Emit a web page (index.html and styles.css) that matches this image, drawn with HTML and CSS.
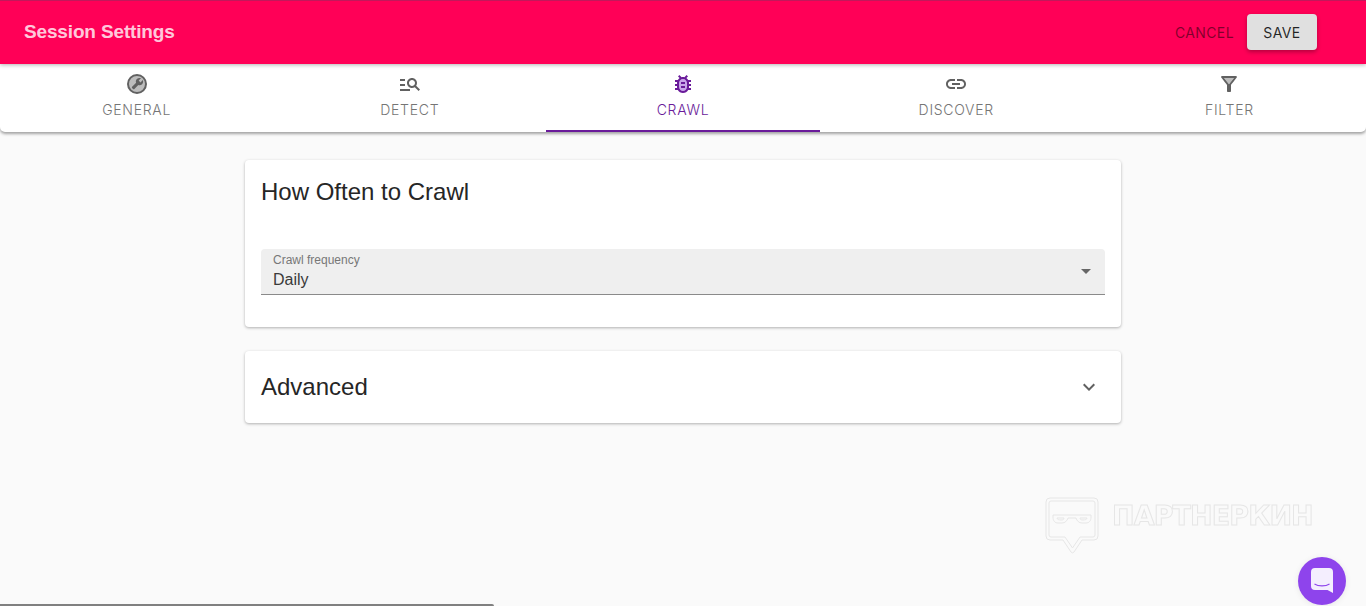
FILE: index.html
```html
<!DOCTYPE html>
<html lang="en">
<head>
<meta charset="utf-8">
<title>Session Settings</title>
<link rel="stylesheet" href="styles.css">
</head>
<body>
<header class="appbar">
  <h1 class="appbar-title">Session Settings</h1>
  <div class="appbar-actions">
    <button class="btn-cancel" type="button">CANCEL</button>
    <button class="btn-save" type="button">SAVE</button>
  </div>
</header>
<nav class="tabs">
  <a class="tab">
    <svg class="tab-icon" viewBox="0 0 24 24"><circle cx="12" cy="12" r="9" class="tone"/><path d="M12 2a10 10 0 1 0 0 20 10 10 0 0 0 0-20zm0 18a8 8 0 1 1 0-16 8 8 0 0 1 0 16z"/><path d="M16 6.300c-1.300-.6-3-.4-4.100.7-1 1-1.300 2.500-.8 3.800l-4 3.900c-.4.4-.4 1 0 1.400l.9.900c.4.400 1 .4 1.400 0l3.900-4c1.300.5 2.800.2 3.800-.8 1.100-1.100 1.300-2.800.7-4.100l-2.300 2.300-1.800-1.800z"/></svg>
    <span>GENERAL</span>
  </a>
  <a class="tab">
    <svg class="tab-icon" viewBox="0 0 24 24"><path d="M7 9H2V7h5v2zm0 3H2v2h5v-2zm13.59 7l-3.83-3.83c-.8.52-1.74.83-2.76.83-2.76 0-5-2.24-5-5s2.24-5 5-5 5 2.24 5 5c0 1.02-.31 1.96-.83 2.75L22 17.59 20.59 19zM17 11c0-1.65-1.35-3-3-3s-3 1.35-3 3 1.35 3 3 3 3-1.35 3-3zM2 19h10v-2H2v2z"/></svg>
    <span>DETECT</span>
  </a>
  <a class="tab tab-active">
    <svg class="tab-icon" viewBox="0 0 24 24"><rect x="7" y="7" width="10" height="13" rx="5" class="tone"/><path d="M20 8h-2.81c-.45-.78-1.07-1.45-1.82-1.96L17 4.41 15.59 3l-2.17 2.17C12.96 5.06 12.49 5 12 5s-.96.06-1.41.17L8.41 3 7 4.41l1.62 1.63C7.88 6.55 7.26 7.22 6.81 8H4v2h2.09c-.05.33-.09.66-.09 1v1H4v2h2v1c0 .34.04.67.09 1H4v2h2.81c1.04 1.79 2.97 3 5.19 3s4.15-1.21 5.19-3H20v-2h-2.09c.05-.33.09-.66.09-1v-1h2v-2h-2v-1c0-.34-.04-.67-.09-1H20V8zm-4 7c0 2.21-1.79 4-4 4s-4-1.79-4-4v-4c0-2.21 1.79-4 4-4s4 1.79 4 4v4z"/><path d="M10 14h4v2h-4zM10 10h4v2h-4z"/></svg>
    <span>CRAWL</span>
  </a>
  <a class="tab">
    <svg class="tab-icon" viewBox="0 0 24 24"><path d="M3.9 12c0-1.71 1.39-3.1 3.1-3.1h4V7H7c-2.76 0-5 2.24-5 5s2.24 5 5 5h4v-1.9H7c-1.71 0-3.1-1.39-3.1-3.1zM8 13h8v-2H8v2zm9-6h-4v1.9h4c1.71 0 3.1 1.39 3.1 3.1s-1.39 3.1-3.1 3.1h-4V17h4c2.76 0 5-2.24 5-5s-2.24-5-5-5z"/></svg>
    <span>DISCOVER</span>
  </a>
  <a class="tab">
    <svg class="tab-icon" viewBox="0 0 24 24"><path class="tone" d="M7 6h10l-5 6.300z"/><path d="M4.25 5.61C6.27 8.2 10 13 10 13v6c0 .55.45 1 1 1h2c.55 0 1-.45 1-1v-6s3.72-4.8 5.74-7.39c.51-.66.04-1.61-.79-1.61H5.04c-.83 0-1.3.95-.79 1.61zM7 6h10l-5 6.300z" fill-rule="evenodd"/></svg>
    <span>FILTER</span>
  </a>
</nav>
<main class="content">
  <section class="card card-crawl">
    <h2 class="card-title">How Often to Crawl</h2>
    <div class="select">
      <div class="select-text">
        <span class="select-label">Crawl frequency</span>
        <span class="select-value">Daily</span>
      </div>
      <svg class="select-arrow" viewBox="0 0 24 24"><path d="M7 10l5 5 5-5z"/></svg>
    </div>
  </section>
  <section class="card card-advanced">
    <h2 class="card-title">Advanced</h2>
    <svg class="chevron" viewBox="0 0 24 24"><path d="M16.59 8.59L12 13.17 7.41 8.59 6 10l6 6 6-6z"/></svg>
  </section>
</main>
<div class="watermark">
  <svg class="watermark-logo" viewBox="0 0 54 57"><path d="M5 1h44a4 4 0 0 1 4 4v34a4 4 0 0 1-4 4H37L29 55a2 2 0 0 1-3 0L18 43H5a4 4 0 0 1-4-4V5a4 4 0 0 1 4-4z"/><path d="M6 4h42a2 2 0 0 1 2 2v32a2 2 0 0 1-2 2H35L27.500 51 20 40H6a2 2 0 0 1-2-2V6a2 2 0 0 1 2-2z"/><path d="M8 18h38v2c0 4-2 6-5 6h-4c-3 0-5-2-6-5h-8c-1 3-3 5-6 5H13c-3 0-5-2-5-6z"/><path d="M12 21h7c0 1.500-1 2-3 2s-4-.5-4-2zM35 21h7c0 1.500-2 2-4 2s-3-.5-3-2z"/></svg>
  <span class="watermark-text">ПАРТНЕРКИН</span>
</div>
<button class="chat" type="button" aria-label="Chat">
  <svg viewBox="0 0 22 25"><path d="M4 0h14a4 4 0 0 1 4 4v21l-5.500-3H4a4 4 0 0 1-4-4V4a4 4 0 0 1 4-4z"/><path class="chat-smile" d="M3.500 16c4 2.600 11 2.600 15 0"/></svg>
</button>
<div class="scrollbar"></div>
</body>
</html>
```
FILE: styles.css
```css
* { box-sizing: border-box; }
html, body { height: 100%; }
body {
  margin: 0;
  height: 606px;
  overflow: hidden;
  background: #fafafa;
  color: #212121;
  font-family: "Liberation Sans", Arial, sans-serif;
}
.appbar {
  position: relative;
  z-index: 2;
  height: 64px;
  padding: 0 49px 1px 24px;
  display: flex;
  align-items: center;
  justify-content: space-between;
  background: #ff0057;
  border-top: 1px solid #c2185b;
  box-shadow: 0 1px 4px rgba(0, 0, 0, .3);
}
.appbar-title {
  margin: 0;
  font-size: 19px;
  letter-spacing: -.15px;
  font-weight: 700;
  color: rgba(255, 255, 255, .8);
}
.appbar-actions { display: flex; align-items: center; gap: 13px; }
.btn-cancel, .btn-save {
  border: 0;
  font-family: "Inter", sans-serif;
  font-size: 14px;
  letter-spacing: .4px;
}
.btn-cancel { padding: 0; background: none; color: rgba(0, 0, 0, .5); }
.btn-save {
  width: 70px;
  height: 36px;
  border-radius: 4px;
  background: #e0e0e0;
  color: rgba(0, 0, 0, .85);
  box-shadow: 0 2px 4px rgba(0, 0, 0, .3);
}
.tabs {
  position: relative;
  z-index: 1;
  height: 68px;
  display: grid;
  grid-template-columns: repeat(5, 1fr);
  background: #fff;
  border-radius: 0 0 5px 5px;
  box-shadow: 0 2px 3px rgba(0, 0, 0, .35);
}
.tab {
  display: flex;
  flex-direction: column;
  align-items: center;
  padding-top: 8px;
  gap: 5px;
  color: #757575;
  font-family: "Inter", sans-serif;
  font-size: 14px;
  line-height: 18px;
  font-weight: 300;
  letter-spacing: .7px;
}
.tab-active {
  color: #6a1b9a;
  border-bottom: 2px solid #6a1b9a;
}
.tab-icon { width: 24px; height: 24px; fill: #616161; }
.tab-icon .tone { fill: #bdbdbd; }
.tab-active .tab-icon { fill: #6a1b9a; }
.tab-active .tab-icon .tone { fill: #c9a6ea; }
.content {
  width: 876px;
  margin: 28px auto 0;
  display: flex;
  flex-direction: column;
  gap: 24px;
}
.card {
  background: #fff;
  border-radius: 4px;
  padding: 0 16px;
  box-shadow: 0 1px 3px rgba(0, 0, 0, .3);
}
.card-crawl { height: 167px; padding-top: 18px; }
.card-title {
  margin: 0;
  font-size: 24px;
  line-height: 28px;
  font-weight: 400;
  color: #262626;
}
.card-advanced {
  height: 72px;
  display: flex;
  align-items: center;
  justify-content: space-between;
  padding-right: 20px;
}
.chevron { width: 24px; height: 24px; fill: #616161; }
.select {
  margin-top: 43px;
  height: 46px;
  padding: 0 7px 1px 12px;
  display: flex;
  align-items: center;
  justify-content: space-between;
  background: #efefef;
  border-bottom: 1px solid #8a8a8a;
  border-radius: 4px 4px 0 0;
}
.select-text { display: flex; flex-direction: column; }
.select-label { font-size: 12px; line-height: 14px; color: #777; }
.select-value { margin-top: 3px; font-size: 16px; line-height: 19px; color: #3a3a3a; }
.select-arrow { width: 24px; height: 24px; fill: #666; }
.watermark {
  position: fixed;
  left: 1045px;
  top: 497px;
  display: flex;
  align-items: flex-start;
  gap: 13px;
}
.watermark-logo {
  width: 54px;
  height: 57px;
  fill: none;
  stroke: #e6e6e6;
  stroke-width: 1;
}
.watermark-text {
  margin-top: 3px;
  font-family: "DejaVu Sans", sans-serif;
  font-weight: 700;
  font-size: 27px;
  line-height: 32px;
  letter-spacing: -.9px;
  color: transparent;
  -webkit-text-stroke: 1px #e6e6e6;
}
.chat {
  position: fixed;
  left: 1298px;
  top: 557px;
  width: 48px;
  height: 48px;
  padding: 11px 13px 12px;
  border: 0;
  border-radius: 50%;
  background: #8e44ec;
  box-shadow: 0 1px 6px rgba(0, 0, 0, .08);
}
.chat svg { display: block; width: 22px; height: 25px; fill: #f4eefe; }
.chat-smile { fill: none; stroke: #8e44ec; stroke-width: 1.200; }
.scrollbar {
  position: fixed;
  left: 0;
  bottom: 0;
  width: 494px;
  height: 2px;
  background: #808080;
  border-top-right-radius: 2px;
}
```
